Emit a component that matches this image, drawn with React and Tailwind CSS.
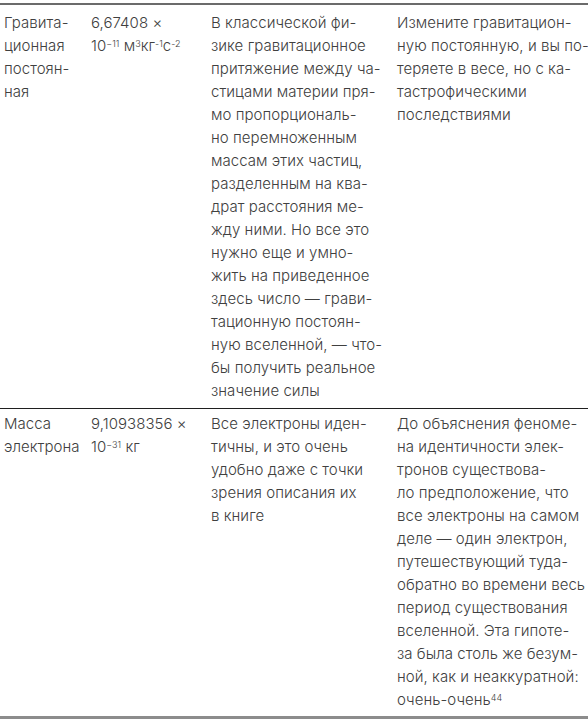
import React from 'react';

const rows = [
  {
    name: ['Гравита-', 'ционная', 'постоян-', 'ная'],
    value: [
      '6,67408 ×',
      <>10<sup className="text-[9px]">−11</sup> м<sup className="text-[9px]">3</sup>кг<sup className="text-[9px]">-1</sup>с<sup className="text-[9px]">-2</sup></>,
    ],
    desc: [
      'В классической фи-',
      'зике гравитационное',
      'притяжение между ча-',
      'стицами материи пря-',
      'мо пропорциональ-',
      'но перемноженным',
      'массам этих частиц,',
      'разделенным на ква-',
      'драт расстояния ме-',
      'жду ними. Но все это',
      'нужно еще и умно-',
      'жить на приведенное',
      'здесь число — грави-',
      'тационную постоян-',
      'ную вселенной, — что-',
      'бы получить реальное',
      'значение силы',
    ],
    note: [
      'Измените гравитацион-',
      'ную постоянную, и вы по-',
      'теряете в весе, но с ка-',
      'тастрофическими',
      'последствиями',
    ],
  },
  {
    name: ['Масса', 'электрона'],
    value: ['9,10938356 ×', <>10<sup className="text-[9px]">−31</sup> кг</>],
    desc: [
      'Все электроны иден-',
      'тичны, и это очень',
      'удобно даже с точки',
      'зрения описания их',
      'в книге',
    ],
    note: [
      'До объяснения феноме-',
      'на идентичности элек-',
      'тронов существова-',
      'ло предположение, что',
      'все электроны на самом',
      'деле — один электрон,',
      'путешествующий туда-',
      'обратно во времени весь',
      'период существования',
      'вселенной. Эта гипоте-',
      'за была столь же безум-',
      'ной, как и неаккуратной:',
      <>очень-очень<sup className="text-[9px]">44</sup></>,
    ],
  },
];

function Cell({ lines }) {
  return (
    <div className="flex flex-col">
      {lines.map((l, i) => (
        <span key={i} className="block whitespace-nowrap">{l}</span>
      ))}
    </div>
  );
}

export default function App() {
  return (
    <div
      className="w-[588px] h-[720px] bg-white text-[#404040] text-[15px] tracking-[0.05px] leading-[23px] font-light overflow-hidden"
      style={{ fontFamily: 'Inter, "Noto Sans", sans-serif' }}
    >
      <div className="pt-[3px]">
        <div className="border-t-2 border-[#6b6b6b]" />
        {rows.map((r, i) => (
          <div
            key={i}
            className={
              'grid grid-cols-[87px_120px_186px_1fr] pl-[4px] ' +
              (i === 0 ? 'pt-[6px] pb-[6px] border-b border-[#1f1f1f]' : 'pt-[3px] pb-[5px] border-b-[3px] border-[#8c8c8c]')
            }
          >
            <Cell lines={r.name} />
            <Cell lines={r.value} />
            <Cell lines={r.desc} />
            <Cell lines={r.note} />
          </div>
        ))}
      </div>
    </div>
  );
}
